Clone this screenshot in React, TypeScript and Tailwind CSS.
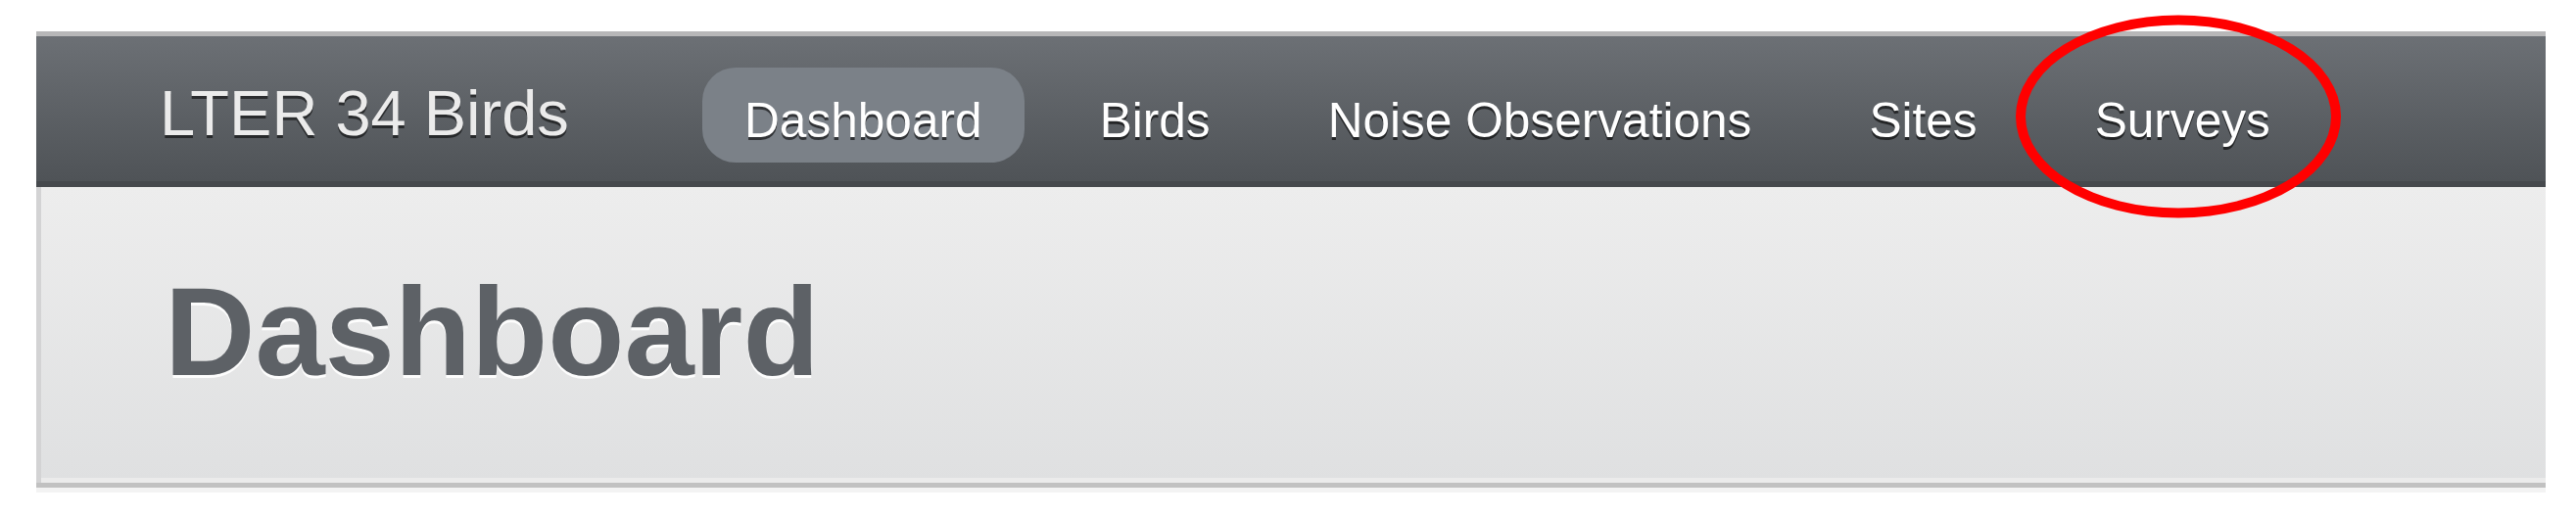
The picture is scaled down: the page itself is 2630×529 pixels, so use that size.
import React from 'react';

const navItems = ['Dashboard', 'Birds', 'Noise Observations', 'Sites', 'Surveys'];

export default function App() {
  const active = 'Dashboard';
  const circled = 'Surveys';
  return <div className="min-h-screen bg-white pt-[32px] pl-[37px] pr-[31px] font-['Liberation_Sans',Arial,sans-serif]">
      <div className="border-t-[5px] border-[#b7b7b8]">
        {/* top bar */}
        <div className="h-[154px] border-b-[6px] border-[#46494d] bg-gradient-to-b from-[#6c7075] to-[#4f5357]">
          <div className="flex h-full items-center pl-[126px]">
            <a className="mt-[8px] w-[554px] text-[65px] leading-none text-[#ebebeb] [text-shadow:0_3px_0_rgba(0,0,0,0.55)]">
              LTER 34 Birds
            </a>
            <ul className="mt-[13px] flex gap-[34px]">
              {navItems.map(item => <li key={item} className="relative">
                  <a className={`block h-[97px] rounded-[34px] px-[43px] pt-[30px] text-[49.6px] leading-none text-white [text-shadow:0_3px_0_rgba(0,0,0,0.6)] ${item === active ? 'bg-[#7b8188]' : ''}`}>
                    {item}
                  </a>
                  {item === circled && <span className="pointer-events-none absolute left-1/2 top-1/2 ml-[-4px] mt-[1px] h-[207px] w-[332px] -translate-x-1/2 -translate-y-1/2 rounded-[50%] border-[10px] border-[#ff0000]" />}
                </li>)}
            </ul>
          </div>
        </div>

        {/* page header */}
        <div className="border-l-[5px] border-[#d3d3d4] bg-gradient-to-b from-[#ededed] to-[#dfe0e1]">
          <h1 className="pt-[84px] pb-[85px] pl-[126px] text-[128px] font-bold leading-none text-[#5d6166] [text-shadow:0_3px_0_rgba(255,255,255,0.9)]">
            Dashboard
          </h1>
          <div className="h-[5px] bg-[#ebebeb]" />
        </div>
        <div className="h-[5px] bg-[#c1c1c1]" />
        <div className="h-[5px] bg-[#f3f3f3]" />
      </div>
    </div>;
}
